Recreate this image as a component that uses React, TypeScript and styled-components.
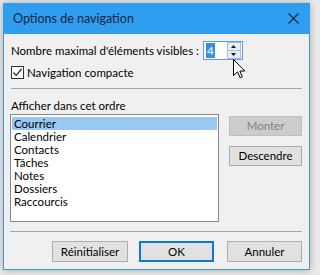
import React from "react";
import styled, { createGlobalStyle } from "styled-components";

const Global = createGlobalStyle`
  html, body { margin: 0; padding: 0; background: #e9e9e9; }
  body { width: 318px; height: 275px; overflow: hidden; position: relative; }
  * { box-sizing: border-box; }
`;

const Dialog = styled.div`
  margin: 3px 0 0 3px;
  width: 307px;
  height: 267px;
  border: 1px solid #3d97e3;
  border-top: none;
  background: #f0f0f0;
  box-shadow: 0 0 7px rgba(0, 0, 0, 0.28);
  display: flex;
  flex-direction: column;
  font-family: Lato, "Noto Sans", sans-serif;
  font-size: 11.5px;
  color: #000;
`;

const TitleBar = styled.div`
  height: 31px;
  flex: none;
  margin: 0 -1px;
  background: #2f9ef1;
  display: flex;
  align-items: center;
  justify-content: space-between;
  padding: 0 11px 0 10px;
`;

const Title = styled.span`
  font-size: 12.5px;
  color: #0f2743;
  line-height: 15px;
`;

const Body = styled.div`
  flex: 1;
  display: flex;
  flex-direction: column;
  padding: 7px 7px 0 7px;
`;

const Row = styled.div<{ $mt?: number; $h: number }>`
  display: flex;
  align-items: center;
  height: ${(p) => p.$h}px;
  margin-top: ${(p) => p.$mt ?? 0}px;
  flex: none;
`;

const Label = styled.span`
  line-height: 15px;
  white-space: nowrap;
`;

const Spinner = styled.div`
  margin-left: 4px;
  width: 40px;
  height: 19px;
  border: 1px solid #5b9ee0;
  background: #fff;
  display: flex;
  align-items: center;
  padding-left: 2px;
`;

const SpinValue = styled.span`
  background: #3390e6;
  color: #fff;
  line-height: 15px;
  padding: 0 1px;
`;

const SpinButtons = styled.div`
  margin-left: auto;
  margin-right: 1px;
  width: 14px;
  height: 17px;
  border: 1px solid #a8bdd3;
  background: #e7eef5;
  display: flex;
  flex-direction: column;
`;

const SpinHalf = styled.div<{ $bottom?: boolean }>`
  flex: 1;
  display: flex;
  align-items: center;
  justify-content: center;
  border-top: ${(p) => (p.$bottom ? "1px solid #a8bdd3" : "none")};
`;

const CheckBox = styled.span`
  width: 13px;
  height: 13px;
  border: 1px solid #333;
  background: #fff;
  display: inline-flex;
  align-items: center;
  justify-content: center;
  margin-right: 3px;
`;

const Separator = styled.div<{ $mt: number; $ml?: number }>`
  height: 1px;
  flex: none;
  background: #a6a6a6;
  margin-top: ${(p) => p.$mt}px;
  margin-left: ${(p) => p.$ml ?? 0}px;
`;

const ListArea = styled.div`
  display: flex;
  flex: none;
  margin-top: 1px;
  margin-left: -1px;
`;

const ListBox = styled.div`
  width: 209px;
  height: 108px;
  border: 1px solid #82878f;
  background: #fff;
  padding: 2px 1px;
  display: flex;
  flex-direction: column;
`;

const ListItem = styled.div<{ $selected?: boolean }>`
  height: 13px;
  line-height: 13px;
  padding-left: 2px;
  overflow: hidden;
  background: ${(p) => (p.$selected ? "#99c9f3" : "transparent")};
`;

const SideButtons = styled.div`
  margin-left: 10px;
  padding-top: 2px;
  display: flex;
  flex-direction: column;
  gap: 10px;
`;

const Button = styled.button<{ $w?: number; $h?: number; $primary?: boolean; $ml?: number }>`
  width: ${(p) => p.$w ?? 73}px;
  height: ${(p) => p.$h ?? 20}px;
  margin-left: ${(p) => p.$ml ?? 0}px;
  font: inherit;
  color: #000;
  background: #e1e1e1;
  border: ${(p) => (p.$primary ? "2px solid #0a78d4" : "1px solid #adadad")};
  padding: 0;
  line-height: 1;
  &:disabled {
    background: #cccccc;
    border-color: #bfbfbf;
    color: #838383;
  }
`;

const Footer = styled.div`
  margin-top: 9px;
  flex: none;
  display: flex;
  justify-content: flex-end;
  gap: 11px;
`;

const Cursor = styled.svg`
  position: absolute;
  left: 233px;
  top: 59px;
`;

const items = ["Courrier", "Calendrier", "Contacts", "Tâches", "Notes", "Dossiers", "Raccourcis"];

export default function App() {
  return (
    <>
      <Global />
      <Dialog>
        <TitleBar>
          <Title>Options de navigation</Title>
          <svg width="11" height="11" viewBox="0 0 11 11">
            <path d="M0.5 0.5 L10.5 10.5 M10.5 0.5 L0.5 10.5" stroke="#10283f" strokeWidth="1.1" />
          </svg>
        </TitleBar>
        <Body>
          <Row $h={19}>
            <Label>Nombre maximal d'éléments visibles :</Label>
            <Spinner>
              <SpinValue>4</SpinValue>
              <SpinButtons>
                <SpinHalf>
                  <svg width="5" height="3" viewBox="0 0 5 3">
                    <path d="M2.5 0 L5 3 L0 3 Z" fill="#111" />
                  </svg>
                </SpinHalf>
                <SpinHalf $bottom>
                  <svg width="5" height="3" viewBox="0 0 5 3">
                    <path d="M0 0 L5 0 L2.5 3 Z" fill="#111" />
                  </svg>
                </SpinHalf>
              </SpinButtons>
            </Spinner>
          </Row>
          <Row $h={13} $mt={6}>
            <CheckBox>
              <svg width="11" height="11" viewBox="0 0 11 11">
                <path d="M1.5 5.5 L4.2 8.3 L9.6 2" stroke="#222" strokeWidth="1.2" fill="none" />
              </svg>
            </CheckBox>
            <Label>Navigation compacte</Label>
          </Row>
          <Separator $mt={9} />
          <Row $h={15} $mt={9}>
            <Label>Afficher dans cet ordre</Label>
          </Row>
          <ListArea>
            <ListBox>
              {items.map((it, i) => (
                <ListItem key={it} $selected={i === 0}>
                  {it}
                </ListItem>
              ))}
            </ListBox>
            <SideButtons>
              <Button disabled>Monter</Button>
              <Button>Descendre</Button>
            </SideButtons>
          </ListArea>
          <Separator $mt={9} $ml={-1} />
          <Footer>
            <Button $w={76} $h={21}>Réinitialiser</Button>
            <Button $w={75} $h={21} $primary>OK</Button>
            <Button $w={75} $h={21} $ml={2}>Annuler</Button>
          </Footer>
        </Body>
      </Dialog>
      <Cursor width="13" height="20" viewBox="0 0 13 20">
        <path
          d="M0.5 0.5 L0.5 16.5 L4.5 12.8 L7.2 18.8 L9.4 17.8 L6.8 12 L11.8 12 Z"
          fill="#fff"
          stroke="#000"
          strokeWidth="1"
          strokeLinejoin="miter"
        />
      </Cursor>
    </>
  );
}
